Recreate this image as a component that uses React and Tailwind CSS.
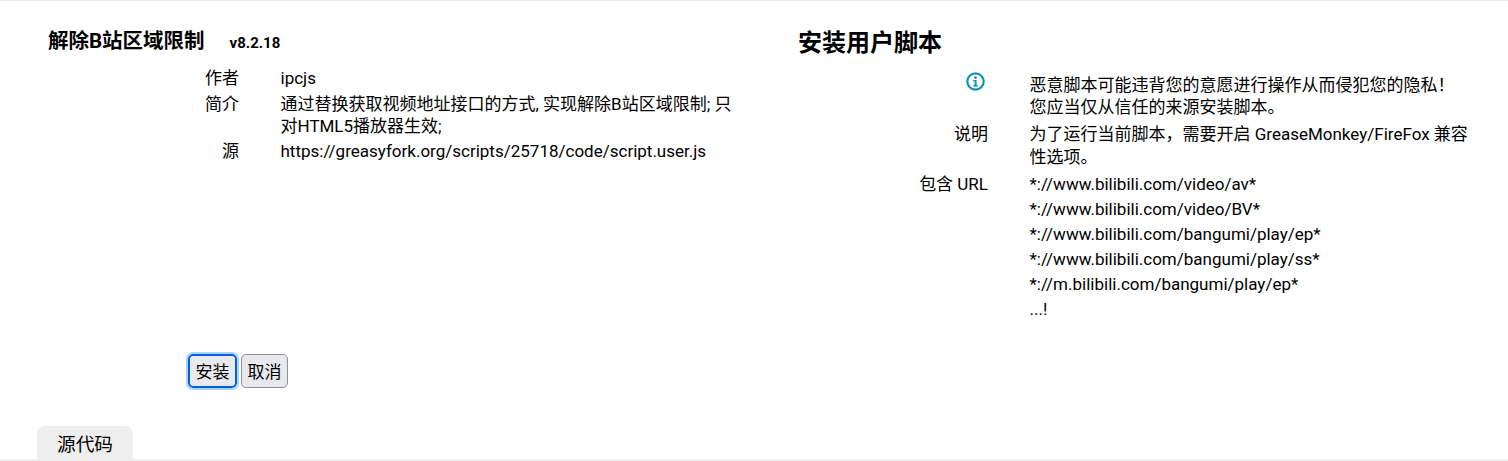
const FONT = 'font-["Roboto","Noto_Sans_CJK_SC",sans-serif]';

function Row({ label, children, className = '' }) {
    return (
        <div className={`flex gap-[41.5px] ${className}`}>
            <div className="w-[191px] shrink-0 text-right">{label}</div>
            <div className="flex-1 min-w-0">{children}</div>
        </div>
    );
}

function InfoIcon() {
    return (
        <svg width="19" height="19" viewBox="0 0 19 19" className="ml-auto mr-[3.5px] mt-[-2px]">
            <circle cx="9.5" cy="9.5" r="8.2" fill="none" stroke="#0f94b8" strokeWidth="2.2" />
            <circle cx="9.5" cy="5.6" r="1.4" fill="#0f94b8" />
            <path d="M7.3 8h3.3v5h1.2v1.4H7.3V13h1.3V9.4H7.3z" fill="#0f94b8" />
        </svg>
    );
}

const urls = [
    '*://www.bilibili.com/video/av*',
    '*://www.bilibili.com/video/BV*',
    '*://www.bilibili.com/bangumi/play/ep*',
    '*://www.bilibili.com/bangumi/play/ss*',
    '*://m.bilibili.com/bangumi/play/ep*',
    '...!',
];

export default function App() {
    return (
        <div className={`${FONT} h-[461px] overflow-hidden bg-white text-black text-[17px] leading-[22px] border-t border-[#eeeeee] border-b-2 flex flex-col`}>
            <div className="flex h-[425px] shrink-0">
                {/* Script info */}
                <div className="w-[750px] shrink-0 pl-[48px] pr-[13px]">
                    <div className="flex items-baseline pt-[27px] h-[66px]">
                        <span className="text-[20.5px] leading-[27px] font-bold">解除B站区域限制</span>
                        <span className="ml-[25px] text-[15px] font-bold">v8.2.18</span>
                    </div>
                    <div>
                        <Row label="作者">ipcjs</Row>
                        <Row label="简介" className="mt-[4px]">
                            通过替换获取视频地址接口的方式, 实现解除B站区域限制; 只对HTML5播放器生效;
                        </Row>
                        <Row label="源" className="mt-[3px]">https://greasyfork.org/scripts/25718/code/script.user.js</Row>
                    </div>
                    <div className="mt-[192px] ml-[140px] flex gap-[4px]">
                        <button className="h-[34px] w-[49px] pt-[1px] rounded-[5px] bg-[#e9e9ed] border-2 border-[#0060df] outline-2 outline-[#a8d4fb]">安装</button>
                        <button className="h-[34px] w-[47px] pt-[1px] rounded-[5px] bg-[#e9e9ed] border border-[#8f8f9d]">取消</button>
                    </div>
                </div>

                {/* Install panel */}
                <div className="flex-1 min-w-0 pl-[47px] pr-[36px]">
                    <div className="pl-[1px] pt-[27px] h-[66px] text-[24px] leading-[30px] font-bold">安装用户脚本</div>
                    <div className="mt-[7px]">
                        <Row label={<InfoIcon />}>
                            <div>恶意脚本可能违背您的意愿进行操作从而侵犯您的隐私！<br />您应当仅从信任的来源安装脚本。</div>
                        </Row>
                        <Row label="说明" className="mt-[5px] leading-[23px]">为了运行当前脚本，需要开启 GreaseMonkey/FireFox 兼容性选项。</Row>
                        <Row label="包含 URL" className="mt-[4px]">
                            <div className="flex flex-col gap-[3px]">
                                {urls.map((u) => <div key={u}>{u}</div>)}
                            </div>
                        </Row>
                    </div>
                </div>
            </div>

            {/* Tabs */}
            <div className="pl-[37px]">
                <div className="w-[96px] h-[33px] rounded-t-[8px] bg-[#eeeeee] text-[18.7px] leading-[38px] text-center">源代码</div>
            </div>
        </div>
    );
}
